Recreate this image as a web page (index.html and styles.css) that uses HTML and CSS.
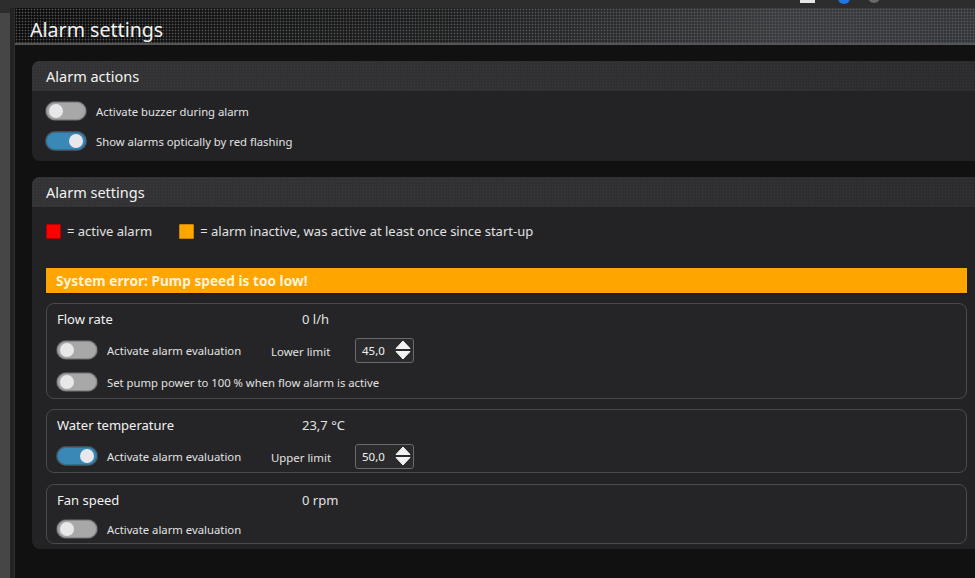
FILE: index.html
```html
<!DOCTYPE html>
<html lang="en">
<head>
    <meta charset="UTF-8">
    <meta name="viewport" content="width=device-width, initial-scale=1.0">
    <title>Alarm settings</title>
    <link rel="stylesheet" href="styles.css">
</head>
<body>
    <div class="topbar">
        <span class="tb-icon tb-doc"></span>
        <span class="tb-icon tb-blue"></span>
        <span class="tb-icon tb-gray"></span>
    </div>
    <div class="frame">
        <div class="sidebar"></div>
        <div class="gutter"></div>
        <div class="main">
            <div class="title-bar">
                <h1>Alarm settings</h1>
            </div>

            <div class="content">
                <!-- Alarm actions -->
                <section class="panel">
                    <div class="panel-head">Alarm actions</div>
                    <div class="panel-body actions">
                        <div class="action-row">
                            <span class="toggle"></span>
                            <span class="label">Activate buzzer during alarm</span>
                        </div>
                        <div class="action-row">
                            <span class="toggle on"></span>
                            <span class="label">Show alarms optically by red flashing</span>
                        </div>
                    </div>
                </section>

                <!-- Alarm settings -->
                <section class="panel">
                    <div class="panel-head">Alarm settings</div>
                    <div class="panel-body settings">
                        <div class="legend">
                            <span class="swatch red"></span>
                            <span class="legend-text">= active alarm</span>
                            <span class="swatch orange"></span>
                            <span class="legend-text">= alarm inactive, was active at least once since start-up</span>
                        </div>

                        <div class="error-bar">System error: Pump speed is too low!</div>

                        <div class="alarm-box">
                            <div class="box-title">
                                <span class="name">Flow rate</span>
                                <span class="value">0 l/h</span>
                            </div>
                            <div class="box-row">
                                <div class="switch-cell">
                                    <span class="toggle"></span>
                                    <span class="label">Activate alarm evaluation</span>
                                </div>
                                <span class="limit-label">Lower limit</span>
                                <div class="spinner">
                                    <span class="spin-value">45,0</span>
                                    <svg class="spin-arrows" width="16" height="20" viewBox="0 0 16 20">
                                        <path d="M8 1 L15 8.5 L1 8.5 Z" fill="#f2f2f2" stroke="#f2f2f2" stroke-linejoin="round"/>
                                        <path d="M1 11.5 L15 11.5 L8 19 Z" fill="#f2f2f2" stroke="#f2f2f2" stroke-linejoin="round"/>
                                    </svg>
                                </div>
                            </div>
                            <div class="box-row">
                                <div class="switch-cell wide">
                                    <span class="toggle"></span>
                                    <span class="label">Set pump power to 100 % when flow alarm is active</span>
                                </div>
                            </div>
                        </div>

                        <div class="alarm-box">
                            <div class="box-title">
                                <span class="name">Water temperature</span>
                                <span class="value">23,7 °C</span>
                            </div>
                            <div class="box-row">
                                <div class="switch-cell">
                                    <span class="toggle on"></span>
                                    <span class="label">Activate alarm evaluation</span>
                                </div>
                                <span class="limit-label">Upper limit</span>
                                <div class="spinner">
                                    <span class="spin-value">50,0</span>
                                    <svg class="spin-arrows" width="16" height="20" viewBox="0 0 16 20">
                                        <path d="M8 1 L15 8.5 L1 8.5 Z" fill="#f2f2f2" stroke="#f2f2f2" stroke-linejoin="round"/>
                                        <path d="M1 11.5 L15 11.5 L8 19 Z" fill="#f2f2f2" stroke="#f2f2f2" stroke-linejoin="round"/>
                                    </svg>
                                </div>
                            </div>
                        </div>

                        <div class="alarm-box">
                            <div class="box-title">
                                <span class="name">Fan speed</span>
                                <span class="value">0 rpm</span>
                            </div>
                            <div class="box-row">
                                <div class="switch-cell">
                                    <span class="toggle"></span>
                                    <span class="label">Activate alarm evaluation</span>
                                </div>
                            </div>
                        </div>
                    </div>
                </section>
            </div>
        </div>
    </div>
</body>
</html>
```

FILE: styles.css
```css
:root {
    --page-bg: #111111;
    --panel-bg: #232326;
    --panel-head: #333335;
    --box-border: #4a4a4c;
    --text: #e2e2e2;
    --title: #f2f2f2;
    --toggle-off: #a8a8a8;
    --toggle-on: #3a88b6;
    --knob: #e8e8ea;
    --orange: #ffa500;
}

* { box-sizing: border-box; }

html, body {
    height: 100%;
}

body {
    margin: 0;
    background: #2d2d2d;
    font-family: "Noto Sans", "Open Sans", sans-serif;
    color: var(--text);
    overflow: hidden;
}

/* --- window chrome --- */
.topbar {
    height: 8px;
    background: #2d2d2d;
    display: flex;
    align-items: flex-end;
    padding-left: 800px;
    overflow: hidden;
}

.tb-icon { display: block; flex: none; }
.tb-doc {
    width: 15px;
    height: 3px;
    margin-bottom: 5px;
    background: #e6e6e6;
}
.tb-blue {
    width: 12px;
    height: 12px;
    margin: 0 0 4px 23px;
    border-radius: 50%;
    background: #1e78e6;
}
.tb-gray {
    width: 12px;
    height: 12px;
    margin: 0 0 5px 18px;
    border-radius: 50%;
    background: #6a6a6a;
}

.frame {
    display: flex;
    height: calc(100% - 8px);
}

.sidebar {
    width: 10px;
    margin-top: 5px;
    background: #464646;
}

.gutter {
    width: 5px;
    background: #232323;
    border-right: 1px solid #2f2f2f;
}

.main {
    flex: 1;
    min-width: 0;
    display: flex;
    flex-direction: column;
}

.title-bar {
    height: 37px;
    border-bottom: 2px solid #555557;
    background:
        radial-gradient(circle, rgba(95, 95, 95, 0.85) 0.75px, transparent 1.1px) 0 0 / 3px 3px,
        linear-gradient(90deg, #0c0c0c 0%, #1e1f20 45%, #3a3c40 80%, #33363b 100%);
    display: flex;
    align-items: flex-end;
    padding: 0 0 1px 15px;
}

.title-bar h1 {
    margin: 0;
    font-size: 19.6px;
    line-height: 24px;
    font-weight: 400;
    color: var(--title);
}

.content {
    flex: 1;
    background: var(--page-bg);
    padding: 16px 0 0 17px;
    overflow: hidden;
}

/* --- panels --- */
.panel {
    margin-right: -6px;
    margin-bottom: 16px;
    border-radius: 8px;
    background: var(--panel-bg);
    overflow: hidden;
}

.panel-head {
    height: 30px;
    padding-left: 14px;
    display: flex;
    align-items: center;
    font-size: 14.5px;
    color: var(--title);
    background:
        radial-gradient(circle, rgba(255, 255, 255, 0.05) 0.7px, transparent 1px) 0 0 / 3px 3px,
        linear-gradient(90deg, #333335 0%, #303032 60%, #2c2c2e 100%);
}

.panel-body.actions {
    padding: 5px 14px;
}

.action-row {
    height: 30px;
    display: flex;
    align-items: center;
    gap: 10px;
}

.label {
    font-size: 11.3px;
    color: var(--text);
    white-space: nowrap;
}

/* --- toggle switch --- */
.toggle {
    position: relative;
    flex: none;
    width: 40px;
    height: 18px;
    border-radius: 9px;
    background: var(--toggle-off);
    box-shadow: 0 0 0 1px #4c4c4e, inset 0 0 0 1px #8a8a8a;
}

.toggle::after {
    content: "";
    position: absolute;
    top: 2px;
    left: 3px;
    width: 14px;
    height: 14px;
    border-radius: 50%;
    background: var(--knob);
}

.toggle.on {
    background: var(--toggle-on);
    box-shadow: 0 0 0 1px #4c4c4e, inset 0 0 0 1px #2f6f96;
}

.toggle.on::after {
    left: auto;
    right: 3px;
}

/* --- alarm settings --- */
.panel-body.settings {
    padding: 14px 14px 5px;
}

.legend {
    height: 20px;
    display: flex;
    align-items: center;
    font-size: 13px;
}

.swatch {
    width: 15px;
    height: 15px;
    margin-right: 6px;
    border-radius: 1px;
}
.swatch.red { background: #ff0000; border: 1px solid #b40000; }
.swatch.orange { background: var(--orange); border: 1px solid #c98400; margin-left: 27px; }

.legend-text { white-space: nowrap; }

.error-bar {
    margin: 27px 0 10px;
    height: 25px;
    padding-left: 10px;
    display: flex;
    align-items: center;
    background: var(--orange);
    box-shadow: 0 1px 1px rgba(40, 20, 0, 0.7);
    color: #fff3da;
    font-size: 13.7px;
    font-weight: 700;
}

.alarm-box {
    margin-bottom: 10px;
    border: 1px solid var(--box-border);
    border-radius: 8px;
    padding: 0 10px;
    background: #252527;
}
.alarm-box:last-child { margin-top: 11px; margin-bottom: 0; }
.alarm-box:last-child .box-row { height: 28px; }

.box-title {
    height: 30px;
    display: flex;
    align-items: center;
    font-size: 13px;
}

.box-title .name {
    width: 245px;
    color: var(--title);
}

.box-row {
    height: 32px;
    display: flex;
    align-items: center;
}

.switch-cell {
    width: 214px;
    display: flex;
    align-items: center;
    gap: 10px;
}
.switch-cell.wide { width: auto; }

.limit-label {
    width: 84px;
    font-size: 11.4px;
    padding-top: 2px;
}

.spinner {
    width: 59px;
    height: 25px;
    border: 1px solid #6a6a6c;
    border-radius: 3px;
    background: #2b2b2d;
    display: flex;
    align-items: center;
    justify-content: space-between;
    padding: 0 2px 0 6px;
}

.spin-value {
    font-size: 11.5px;
    color: #f0f0f0;
}

.spin-arrows { display: block; }
```
